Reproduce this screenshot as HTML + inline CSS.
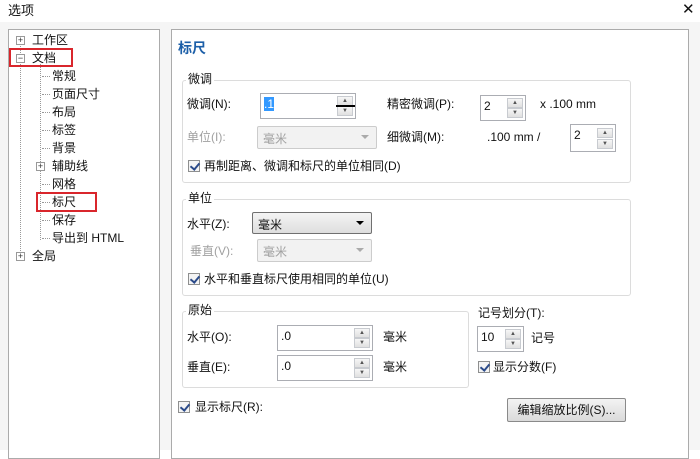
<!DOCTYPE html>
<html><head><meta charset="utf-8"><style>
*{margin:0;padding:0;box-sizing:border-box}
body{width:700px;height:450px;background:#fff;font-family:"Liberation Sans","Noto Sans CJK SC",sans-serif;font-size:12px;color:#111;position:relative;overflow:hidden}
.a{position:absolute;white-space:nowrap;line-height:14px}
.g{color:#a0a0a0}
.box{position:absolute;border:1px solid #ababab}
.grp{position:absolute;border:1px solid #dcdcdc;border-radius:3px}
.gl{position:absolute;background:#fff;padding:0 2px;line-height:14px}
.spin{position:absolute;border:1px solid #abadb3;background:#fff}
.spin .b{position:absolute;right:2px;width:16px;border:1px solid #c8cbd0;background:linear-gradient(#f6f6f6,#e0e0e0);font-size:6px;color:#555;text-align:center;line-height:9px;height:10px}
.spin .t{position:absolute;left:3px;top:3px}
.cmb{position:absolute;border:1px solid #ccc;border-radius:2px;background:#f2f2f2;color:#a0a0a0;padding:3px 0 0 5px}
.cmb .ar{position:absolute;right:7px;top:8px;width:0;height:0;border-left:4px solid transparent;border-right:4px solid transparent;border-top:4px solid #aaa}
.cb{position:absolute;width:12px;height:12px;border:1px solid #8e8f8f;background:#f4f4f4}
.cb:after{content:"";position:absolute;left:3px;top:0px;width:4px;height:7px;border-right:2px solid #2b4b8a;border-bottom:2px solid #2b4b8a;transform:rotate(40deg)}
.pm{position:absolute;width:9px;height:9px;border:1px solid #999;background:#fff;font-size:9px;line-height:7px;text-align:center;color:#333}
.dv{position:absolute;border-left:1px dotted #999}
.dh{position:absolute;border-top:1px dotted #999;width:8px}
.red{position:absolute;border:2px solid #d9262c}
</style></head><body>
<div class="a" style="left:8px;top:4px;font-size:13px">选项</div>
<div class="a" style="left:682px;top:1px;font-size:15px;line-height:18px">✕</div>
<div style="position:absolute;left:0;top:22px;width:700px;height:428px;background:#f5f5f5"></div>
<!-- tree -->
<div class="box" style="left:8px;top:29px;width:152px;height:430px;background:#fff"></div>
<div class="dv" style="left:20px;top:44px;height:215px"></div>
<div class="dv" style="left:40px;top:64px;height:176px"></div>
<div class="pm" style="left:16px;top:36px">+</div>
<div class="pm" style="left:16px;top:54px">−</div>
<div class="pm" style="left:36px;top:162px">+</div>
<div class="pm" style="left:16px;top:252px">+</div>
<div class="a" style="left:32px;top:33px">工作区</div>
<div class="a" style="left:32px;top:51px">文档</div>
<div class="a" style="left:52px;top:69px">常规</div>
<div class="a" style="left:52px;top:87px">页面尺寸</div>
<div class="a" style="left:52px;top:105px">布局</div>
<div class="a" style="left:52px;top:123px">标签</div>
<div class="a" style="left:52px;top:141px">背景</div>
<div class="a" style="left:52px;top:159px">辅助线</div>
<div class="a" style="left:52px;top:177px">网格</div>
<div class="a" style="left:52px;top:195px">标尺</div>
<div class="a" style="left:52px;top:213px">保存</div>
<div class="a" style="left:52px;top:231px">导出到 HTML</div>
<div class="a" style="left:32px;top:249px">全局</div>
<div class="dh" style="left:42px;top:76px"></div><div class="dh" style="left:42px;top:94px"></div><div class="dh" style="left:42px;top:112px"></div><div class="dh" style="left:42px;top:130px"></div><div class="dh" style="left:42px;top:148px"></div><div class="dh" style="left:42px;top:184px"></div><div class="dh" style="left:42px;top:202px"></div><div class="dh" style="left:42px;top:220px"></div><div class="dh" style="left:42px;top:238px"></div>
<div class="red" style="left:9px;top:48px;width:64px;height:19px"></div>
<div class="red" style="left:36px;top:192px;width:61px;height:20px"></div>
<!-- right panel -->
<div class="box" style="left:171px;top:29px;width:518px;height:430px;background:#fff"></div>
<div class="a" style="left:178px;top:40px;font-size:14px;font-weight:bold;color:#1c5fa8;line-height:16px">标尺</div>

<div class="grp" style="left:182px;top:80px;width:449px;height:103px"></div>
<div class="gl" style="left:186px;top:72px">微调</div>
<div class="a" style="left:187px;top:97px">微调(N):</div>
<div class="spin" style="left:260px;top:93px;width:96px;height:26px"><span class="t" style="background:#3399ff;color:#fff">.1</span><div class="b" style="top:2px">▲</div><div class="b" style="top:12px">▼</div></div>
<div style="position:absolute;left:336px;top:105px;width:19px;height:2px;background:#000"></div>
<div class="a" style="left:387px;top:97px">精密微调(P):</div>
<div class="spin" style="left:480px;top:95px;width:46px;height:26px"><span class="t">2</span><div class="b" style="top:2px">▲</div><div class="b" style="top:12px">▼</div></div>
<div class="a" style="left:540px;top:97px">x .100 mm</div>
<div class="a g" style="left:187px;top:130px">单位(I):</div>
<div class="cmb" style="left:257px;top:126px;width:120px;height:23px">毫米<span class="ar"></span></div>
<div class="a" style="left:387px;top:130px">细微调(M):</div>
<div class="a" style="left:487px;top:130px">.100 mm /</div>
<div class="spin" style="left:570px;top:124px;width:46px;height:28px"><span class="t">2</span><div class="b" style="top:3px">▲</div><div class="b" style="top:14px">▼</div></div>
<div class="cb" style="left:188px;top:160px"></div>
<div class="a" style="left:204px;top:159px">再制距离、微调和标尺的单位相同(D)</div>

<div class="grp" style="left:182px;top:199px;width:449px;height:97px"></div>
<div class="gl" style="left:186px;top:191px">单位</div>
<div class="a" style="left:187px;top:217px">水平(Z):</div>
<div class="cmb" style="left:252px;top:212px;width:120px;height:22px;color:#111;background:linear-gradient(#f4f4f4,#dedede);border-color:#707070">毫米<span class="ar" style="border-top-color:#000"></span></div>
<div class="a g" style="left:190px;top:244px">垂直(V):</div>
<div class="cmb" style="left:257px;top:239px;width:115px;height:23px">毫米<span class="ar"></span></div>
<div class="cb" style="left:188px;top:273px"></div>
<div class="a" style="left:204px;top:272px">水平和垂直标尺使用相同的单位(U)</div>

<div class="grp" style="left:182px;top:311px;width:287px;height:77px"></div>
<div class="gl" style="left:186px;top:303px">原始</div>
<div class="a" style="left:187px;top:330px">水平(O):</div>
<div class="spin" style="left:277px;top:325px;width:96px;height:26px"><span class="t">.0</span><div class="b" style="top:2px">▲</div><div class="b" style="top:12px">▼</div></div>
<div class="a" style="left:383px;top:330px">毫米</div>
<div class="a" style="left:187px;top:360px">垂直(E):</div>
<div class="spin" style="left:277px;top:355px;width:96px;height:26px"><span class="t">.0</span><div class="b" style="top:2px">▲</div><div class="b" style="top:12px">▼</div></div>
<div class="a" style="left:383px;top:360px">毫米</div>

<div class="a" style="left:478px;top:306px">记号划分(T):</div>
<div class="spin" style="left:477px;top:326px;width:47px;height:26px"><span class="t">10</span><div class="b" style="top:2px">▲</div><div class="b" style="top:12px">▼</div></div>
<div class="a" style="left:531px;top:331px">记号</div>
<div class="cb" style="left:478px;top:361px"></div>
<div class="a" style="left:493px;top:360px">显示分数(F)</div>

<div class="cb" style="left:178px;top:401px"></div>
<div class="a" style="left:195px;top:400px">显示标尺(R):</div>
<div style="position:absolute;left:507px;top:398px;width:119px;height:24px;border:1px solid #8a8a8a;border-radius:2px;background:linear-gradient(#f3f3f3,#dadada);text-align:center;line-height:22px">编辑缩放比例(S)...</div>
</body></html>
